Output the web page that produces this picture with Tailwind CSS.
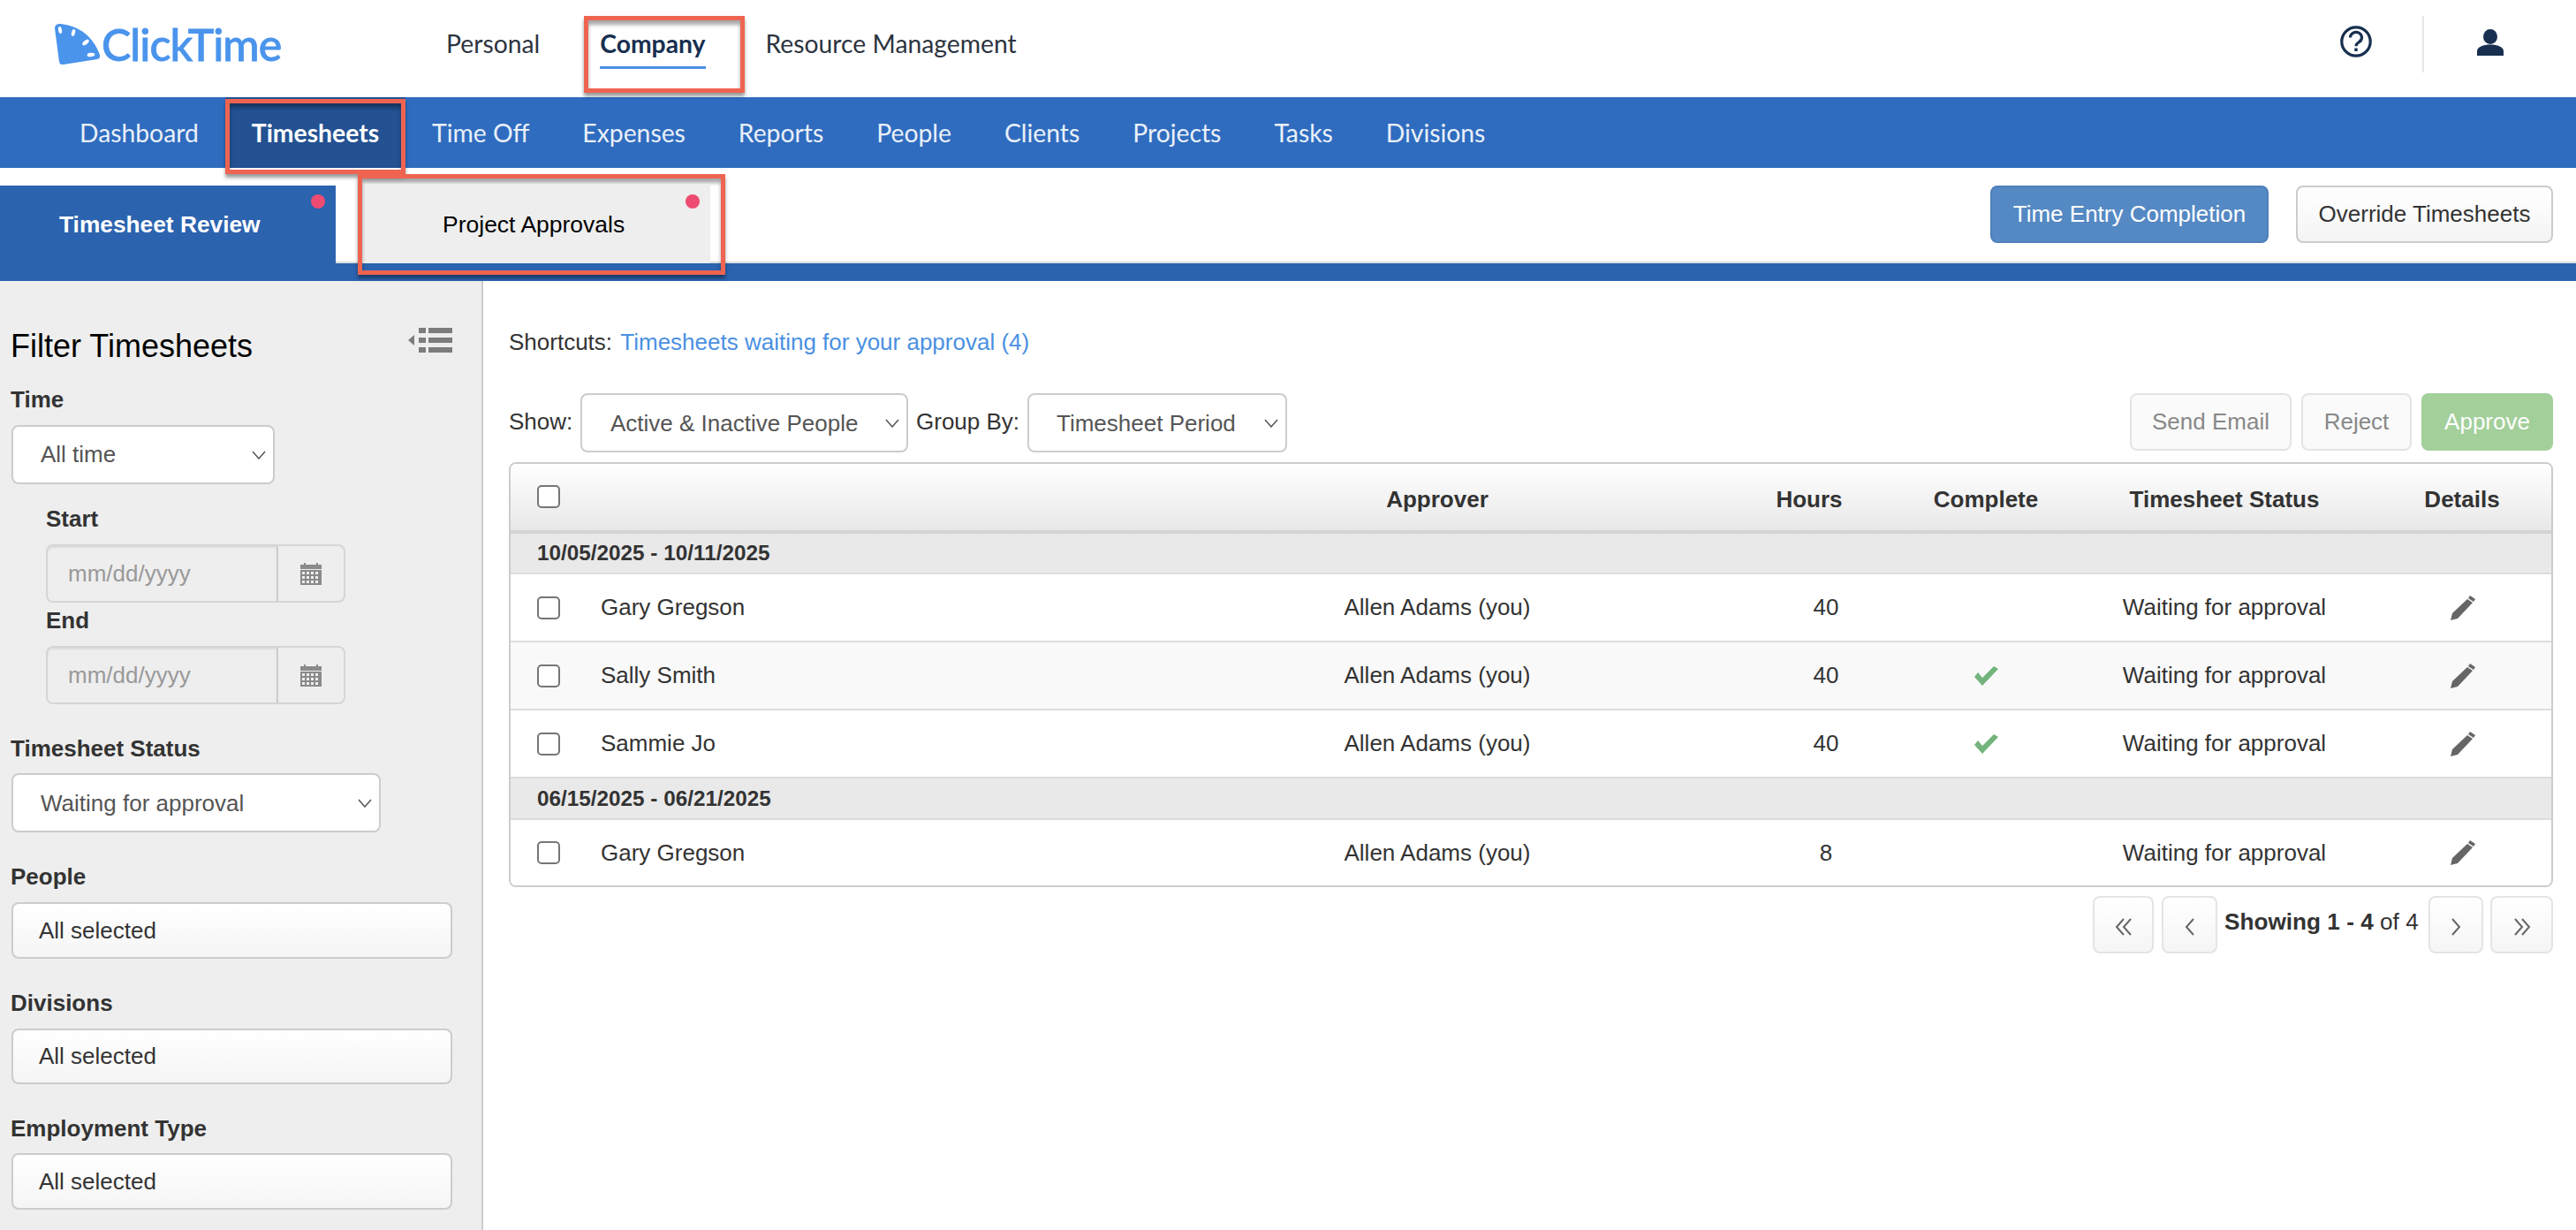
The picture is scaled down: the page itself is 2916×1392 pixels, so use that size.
<!DOCTYPE html>
<html lang="en">

<head>
    <meta charset="UTF-8">
    <title>ClickTime - Timesheet Review</title>
    <script src="https://cdn.jsdelivr.net/npm/@tailwindcss/browser@4"></script>
</head>

<body class="relative w-[2916px] h-[1392px] overflow-hidden bg-white font-['Liberation_Sans',sans-serif] text-[26px] text-[#333]">
    <!--Top bar-->
    <header class="flex h-[110px] font-['Lato',sans-serif] text-[28.3px] text-[#2c3440]">
        <div class="flex w-[505px] pl-[60px] pt-[27px] items-start gap-[2px] shrink-0">
            <svg class="w-[53px] h-[46px]" viewBox="0 0 53 46">
                <path d="M2 5Q2 0 8 0C30 2 46 15 53 35Q54 39 50 40L12 46Q8 47 7 43Z" fill="#4a94ec"/>
                <ellipse cx="8" cy="7" rx="2" ry="4" fill="#fff" transform="rotate(-10 8 7)"/>
                <ellipse cx="23" cy="10" rx="2" ry="4" fill="#fff" transform="rotate(15 23 10)"/>
                <ellipse cx="37" cy="21" rx="2.200" ry="4.400" fill="#fff" transform="rotate(50 37 21)"/>
                <ellipse cx="43" cy="35" rx="2.200" ry="4.400" fill="#fff" transform="rotate(85 43 35)"/>
            </svg>
            <span class="text-[50px] leading-[46px] font-medium text-[#4a94ec] tracking-[-1px] [-webkit-text-stroke:0.8px_#4a94ec]">ClickTime</span>
        </div>
        <nav class="flex gap-[68px] pt-[32px] leading-[34px]">
            <a class="h-[46px]">Personal</a>
            <a class="h-[46px] font-bold text-[#182f50] border-b-[3px] border-[#4a90e2]">Company</a>
            <a class="h-[46px]">Resource Management</a>
        </nav>
        <div class="ml-auto flex items-start h-[64px] mt-[18px] pr-[82px]">
            <svg class="w-[36px] h-[36px] mt-[11px]" viewBox="0 0 36 36" fill="none" stroke="#182f50">
                <circle cx="18" cy="18" r="16.200" stroke-width="3.200"/>
                <path d="M11.500 13.500a6.500 6 0 1 1 10 5c-2.500 1.600-3.500 2.500-3.500 4.700" stroke-width="3.200"/>
                <path d="M18 25.500v3.500" stroke-width="3.400"/>
            </svg>
            <div class="ml-[57px] w-[2px] h-[64px] bg-[#e6e6e6]"></div>
            <svg class="ml-[60px] w-[30px] h-[30px] mt-[15px]" viewBox="0 0 30 30" fill="#182f50">
                <ellipse cx="15" cy="8.500" rx="8" ry="8.500"/>
                <path d="M0 30v-5c0-5 7-7.500 15-7.500S30 20 30 25v5Z"/>
            </svg>
        </div>
    </header>

    <!--Blue nav-->
    <nav class="flex h-[80px] pl-[60px] bg-[#2f6cbf] font-['Lato',sans-serif] text-[28.3px] text-white/90 leading-[80px]">
        <a class="px-[30px]">Dashboard</a>
        <a class="px-[30px] bg-[#235192] font-bold text-white">Timesheets</a>
        <a class="px-[30px]">Time Off</a>
        <a class="px-[30px]">Expenses</a>
        <a class="px-[30px]">Reports</a>
        <a class="px-[30px]">People</a>
        <a class="px-[30px]">Clients</a>
        <a class="px-[30px]">Projects</a>
        <a class="px-[30px]">Tasks</a>
        <a class="px-[30px]">Divisions</a>
    </nav>

    <!--Tabs-->
    <div class="flex items-end h-[108px] border-b-2 border-[#ddd]">
        <div class="relative w-[380px] h-[88px] -mb-[2px] pl-[67px] bg-[#2b63af] font-bold text-white text-[26.3px] leading-[88px]">
            Timesheet Review
            <span class="absolute left-[352px] top-[10px] w-[16px] h-[16px] rounded-full bg-[#ee4b72]"></span>
        </div>
        <div class="relative ml-[30px] w-[394px] h-[88px] -mb-[2px] pl-[91px] bg-[#eee] text-black text-[26.5px] leading-[88px]">
            Project Approvals
            <span class="absolute left-[366px] top-[10px] w-[16px] h-[16px] rounded-full bg-[#ee4b72]"></span>
        </div>
        <div class="ml-auto self-start flex gap-[31px] mt-[20px] pr-[26px]">
            <button class="w-[315px] h-[65px] rounded-[8px] bg-[#5589c4] border-2 border-[#4f80bb] text-white">Time Entry Completion</button>
            <button class="w-[291px] h-[65px] rounded-[8px] bg-gradient-to-b from-white to-[#f4f4f4] border-2 border-[#ccc]">Override Timesheets</button>
        </div>
    </div>
    <div class="h-[20px] bg-[#2b63af]"></div>

    <div class="flex h-[1074px]">
        <!--Filters-->
        <aside class="w-[547px] shrink-0 pl-[13px] pr-[33px] bg-[#eee] border-r-2 border-[#ccc]">
            <div class="flex justify-between mt-[50px] h-[44px]">
                <h2 class="text-[36px] leading-[48px] text-black -ml-px">Filter Timesheets</h2>
                <svg class="w-[50px] h-[28px] mt-[3px]" viewBox="0 0 50 28" fill="#7c7c7d">
                    <path d="M0 14L7 8V20Z"/>
                    <rect x="12" y="0" width="8" height="6"/><rect x="12" y="11" width="8" height="6"/><rect x="12" y="22" width="8" height="6"/>
                    <rect x="23" y="0" width="27" height="6"/><rect x="23" y="11" width="27" height="6"/><rect x="23" y="22" width="27" height="6"/>
                </svg>
            </div>

            <label class="block -ml-px mt-[25px] h-[30px] leading-[30px] font-bold">Time</label>
            <div class="flex items-center justify-between mt-[14px] w-[298px] h-[67px] pl-[31px] pr-[8px] bg-white border-2 border-[#ccc] rounded-[8px] text-[#555]">
                <span>All time</span>
                <svg class="w-[16px] h-[10px]" viewBox="0 0 16 10" fill="none" stroke="#555" stroke-width="1.500"><path d="M1 1l7 8 7-8"/></svg>
            </div>

            <div class="ml-[39px]">
                <label class="block mt-[24px] h-[30px] leading-[30px] font-bold">Start</label>
                <div class="flex mt-[14px] w-[339px] h-[66px] border-2 border-[#d5d5d5] rounded-[8px]">
                    <div class="w-[261px] pl-[23px] leading-[62px] text-[#999] bg-[#eee] border-r-2 border-[#ccc] rounded-l-[6px] shadow-[inset_0_2px_2px_rgba(0,0,0,0.08)]">mm/dd/yyyy</div>
                    <div class="flex-1 flex items-center justify-center">
                        <svg class="w-[24px] h-[26px]" viewBox="0 0 24 26" fill="#8a8a8a">
                            <path d="M0 3h4V1h2v2h12V1h2v2h4v5H0Z"/>
                            <path fill-rule="evenodd" d="M0 9h24v17H0ZM2 11v3h3v-3Zm5 0v3h3v-3Zm5 0v3h3v-3Zm5 0v3h3v-3ZM2 16v3h3v-3Zm5 0v3h3v-3Zm5 0v3h3v-3Zm5 0v3h3v-3ZM2 21v3h3v-3Zm5 0v3h3v-3Zm5 0v3h3v-3Zm5 0v3h3v-3Z"/>
                        </svg>
                    </div>
                </div>
                <label class="block mt-[5px] h-[30px] leading-[30px] font-bold">End</label>
                <div class="flex mt-[14px] w-[339px] h-[66px] border-2 border-[#d5d5d5] rounded-[8px]">
                    <div class="w-[261px] pl-[23px] leading-[62px] text-[#999] bg-[#eee] border-r-2 border-[#ccc] rounded-l-[6px] shadow-[inset_0_2px_2px_rgba(0,0,0,0.08)]">mm/dd/yyyy</div>
                    <div class="flex-1 flex items-center justify-center">
                        <svg class="w-[24px] h-[26px]" viewBox="0 0 24 26" fill="#8a8a8a">
                            <path d="M0 3h4V1h2v2h12V1h2v2h4v5H0Z"/>
                            <path fill-rule="evenodd" d="M0 9h24v17H0ZM2 11v3h3v-3Zm5 0v3h3v-3Zm5 0v3h3v-3Zm5 0v3h3v-3ZM2 16v3h3v-3Zm5 0v3h3v-3Zm5 0v3h3v-3Zm5 0v3h3v-3ZM2 21v3h3v-3Zm5 0v3h3v-3Zm5 0v3h3v-3Zm5 0v3h3v-3Z"/>
                        </svg>
                    </div>
                </div>
            </div>

            <label class="block -ml-px mt-[35px] h-[30px] leading-[30px] font-bold">Timesheet Status</label>
            <div class="flex items-center justify-between mt-[13px] w-[418px] h-[67px] pl-[31px] pr-[8px] bg-white border-2 border-[#ccc] rounded-[8px] text-[#555]">
                <span class="pt-[2px]">Waiting for approval</span>
                <svg class="w-[16px] h-[10px]" viewBox="0 0 16 10" fill="none" stroke="#555" stroke-width="1.500"><path d="M1 1l7 8 7-8"/></svg>
            </div>

            <label class="block -ml-px mt-[35px] h-[30px] leading-[30px] font-bold">People</label>
            <button class="block mt-[14px] w-[499px] h-[64px] pl-[29px] text-left bg-gradient-to-b from-white to-[#f5f5f5] border-2 border-[#ccc] rounded-[8px]">All selected</button>

            <label class="block -ml-px mt-[35px] h-[30px] leading-[30px] font-bold">Divisions</label>
            <button class="block mt-[14px] w-[499px] h-[63px] pl-[29px] text-left bg-gradient-to-b from-white to-[#f5f5f5] border-2 border-[#ccc] rounded-[8px]">All selected</button>

            <label class="block -ml-px mt-[35px] h-[30px] leading-[30px] font-bold">Employment Type</label>
            <button class="block mt-[13px] w-[499px] h-[64px] pl-[29px] text-left bg-gradient-to-b from-white to-[#f5f5f5] border-2 border-[#ccc] rounded-[8px]">All selected</button>
        </aside>

        <!--Table area-->
        <main class="flex-1 pl-[29px] pr-[26px]">
            <p class="mt-[53px] h-[32px] leading-[32px]">Shortcuts: <a class="ml-[2px] text-[#4a90e2]">Timesheets waiting for your approval (4)</a></p>

            <div class="flex mt-[42px] h-[67px]">
                <span class="w-[81px] leading-[64px]">Show:</span>
                <div class="flex items-center justify-between w-[371px] h-[67px] pl-[32px] pr-[8px] border-2 border-[#ccc] rounded-[8px] text-[#555]">
                    <span class="pt-[2px]">Active &amp; Inactive People</span>
                    <svg class="w-[16px] h-[10px]" viewBox="0 0 16 10" fill="none" stroke="#555" stroke-width="1.500"><path d="M1 1l7 8 7-8"/></svg>
                </div>
                <span class="ml-[9px] w-[126px] leading-[64px]">Group By:</span>
                <div class="flex items-center justify-between w-[294px] h-[67px] pl-[31px] pr-[8px] border-2 border-[#ccc] rounded-[8px] text-[#555]">
                    <span class="pt-[2px]">Timesheet Period</span>
                    <svg class="w-[16px] h-[10px]" viewBox="0 0 16 10" fill="none" stroke="#555" stroke-width="1.500"><path d="M1 1l7 8 7-8"/></svg>
                </div>
                <div class="ml-auto flex gap-[11px] h-[65px]">
                    <button class="w-[183px] rounded-[8px] border-2 border-[#e4e4e4] bg-[#fafafa] text-[#888]">Send Email</button>
                    <button class="w-[125px] rounded-[8px] border-2 border-[#e4e4e4] bg-[#fafafa] text-[#888]">Reject</button>
                    <button class="w-[149px] rounded-[8px] bg-[#a3cf9b] text-white">Approve</button>
                </div>
            </div>

            <div class="mt-[11px] border-2 border-[#ccc] rounded-[8px] overflow-hidden">
                <div class="grid grid-cols-[888px_322px_200px_158px_204px_336px_202px] items-center h-[79px] border-b-4 border-[#d4d4d4] bg-gradient-to-b from-white to-[#e8e8e8] font-bold">
                    <div class="pl-[30px] flex -mt-[2px]"><input type="checkbox" class="appearance-none w-[26px] h-[26px] bg-white border-2 border-[#767676] rounded-[5px]"></div>
                    <div class="text-center pt-[6px]">Approver</div>
                    <div></div>
                    <div class="text-center pr-[38px] pt-[6px]">Hours</div>
                    <div class="text-center pt-[6px]">Complete</div>
                    <div class="text-center pt-[6px]">Timesheet Status</div>
                    <div class="text-center pt-[6px]">Details</div>
                </div>

                <div class="h-[46px] pl-[30px] leading-[44px] text-[24.3px] font-bold bg-[#e9e9e9] border-b-2 border-[#ddd]">10/05/2025 - 10/11/2025</div>

                <div class="grid grid-cols-[888px_322px_200px_158px_204px_336px_202px] items-center h-[77px] border-b-2 border-[#ddd] bg-white">
                    <div class="pl-[30px] flex items-center"><input type="checkbox" class="appearance-none w-[26px] h-[26px] bg-white border-2 border-[#767676] rounded-[5px]"><span class="ml-[46px]">Gary Gregson</span></div>
                    <div class="text-center">Allen Adams (you)</div>
                    <div></div>
                    <div class="text-center">40</div>
                    <div></div>
                    <div class="text-center">Waiting for approval</div>
                    <div class="flex justify-center">
                        <svg class="w-[29px] h-[28px]" viewBox="0 0 29 28" fill="#666"><path d="M20 4l6 4L9 26l-8 2 2-8Z"/><path d="M23 0l6 4-2 3-6-4Z"/></svg>
                    </div>
                </div>

                <div class="grid grid-cols-[888px_322px_200px_158px_204px_336px_202px] items-center h-[77px] border-b-2 border-[#ddd] bg-[#f9f9f9]">
                    <div class="pl-[30px] flex items-center"><input type="checkbox" class="appearance-none w-[26px] h-[26px] bg-white border-2 border-[#767676] rounded-[5px]"><span class="ml-[46px]">Sally Smith</span></div>
                    <div class="text-center">Allen Adams (you)</div>
                    <div></div>
                    <div class="text-center">40</div>
                    <div class="flex justify-center">
                        <svg class="w-[27px] h-[22px]" viewBox="0 0 27 22" fill="#73b47c"><path d="M0 12l4-5 5 6L22 0l5 3L9 22Z"/></svg>
                    </div>
                    <div class="text-center">Waiting for approval</div>
                    <div class="flex justify-center">
                        <svg class="w-[29px] h-[28px]" viewBox="0 0 29 28" fill="#666"><path d="M20 4l6 4L9 26l-8 2 2-8Z"/><path d="M23 0l6 4-2 3-6-4Z"/></svg>
                    </div>
                </div>

                <div class="grid grid-cols-[888px_322px_200px_158px_204px_336px_202px] items-center h-[77px] border-b-2 border-[#ddd] bg-white">
                    <div class="pl-[30px] flex items-center"><input type="checkbox" class="appearance-none w-[26px] h-[26px] bg-white border-2 border-[#767676] rounded-[5px]"><span class="ml-[46px]">Sammie Jo</span></div>
                    <div class="text-center">Allen Adams (you)</div>
                    <div></div>
                    <div class="text-center">40</div>
                    <div class="flex justify-center">
                        <svg class="w-[27px] h-[22px]" viewBox="0 0 27 22" fill="#73b47c"><path d="M0 12l4-5 5 6L22 0l5 3L9 22Z"/></svg>
                    </div>
                    <div class="text-center">Waiting for approval</div>
                    <div class="flex justify-center">
                        <svg class="w-[29px] h-[28px]" viewBox="0 0 29 28" fill="#666"><path d="M20 4l6 4L9 26l-8 2 2-8Z"/><path d="M23 0l6 4-2 3-6-4Z"/></svg>
                    </div>
                </div>

                <div class="h-[47px] pl-[30px] leading-[45px] text-[24.3px] font-bold bg-[#e9e9e9] border-b-2 border-[#ddd]">06/15/2025 - 06/21/2025</div>

                <div class="grid grid-cols-[888px_322px_200px_158px_204px_336px_202px] items-center h-[74px] bg-white">
                    <div class="pl-[30px] flex items-center"><input type="checkbox" class="appearance-none w-[26px] h-[26px] bg-white border-2 border-[#767676] rounded-[5px]"><span class="ml-[46px]">Gary Gregson</span></div>
                    <div class="text-center">Allen Adams (you)</div>
                    <div></div>
                    <div class="text-center">8</div>
                    <div></div>
                    <div class="text-center">Waiting for approval</div>
                    <div class="flex justify-center">
                        <svg class="w-[29px] h-[28px]" viewBox="0 0 29 28" fill="#666"><path d="M20 4l6 4L9 26l-8 2 2-8Z"/><path d="M23 0l6 4-2 3-6-4Z"/></svg>
                    </div>
                </div>
            </div>

            <!--Pagination-->
            <div class="flex justify-end mt-[10px] h-[65px]">
                <button class="flex items-center justify-center pt-[4px] w-[69px] rounded-[8px] border-2 border-[#e4e4e4] bg-gradient-to-b from-white to-[#f5f5f5]">
                    <svg class="w-[20px] h-[20px]" viewBox="0 0 20 20" fill="none" stroke="#666" stroke-width="2"><path d="M10 1L2 10l8 9M18 1l-8 9 8 9"/></svg>
                </button>
                <button class="ml-[9px] flex items-center justify-center pt-[4px] w-[63px] rounded-[8px] border-2 border-[#e4e4e4] bg-gradient-to-b from-white to-[#f5f5f5]">
                    <svg class="w-[12px] h-[20px]" viewBox="0 0 12 20" fill="none" stroke="#666" stroke-width="2"><path d="M10 1L2 10l8 9"/></svg>
                </button>
                <span class="ml-[8px] w-[221px] whitespace-nowrap leading-[58px] text-[26.2px]"><b>Showing 1 - 4</b> of 4</span>
                <button class="ml-[10px] flex items-center justify-center pt-[4px] w-[62px] rounded-[8px] border-2 border-[#e4e4e4] bg-gradient-to-b from-white to-[#f5f5f5]">
                    <svg class="w-[12px] h-[20px]" viewBox="0 0 12 20" fill="none" stroke="#666" stroke-width="2"><path d="M2 1l8 9-8 9"/></svg>
                </button>
                <button class="ml-[8px] flex items-center justify-center pt-[4px] w-[71px] rounded-[8px] border-2 border-[#e4e4e4] bg-gradient-to-b from-white to-[#f5f5f5]">
                    <svg class="w-[20px] h-[20px]" viewBox="0 0 20 20" fill="none" stroke="#666" stroke-width="2"><path d="M2 1l8 9-8 9M10 1l8 9-8 9"/></svg>
                </button>
            </div>
        </main>
    </div>

    <!--Red annotation boxes drawn over the screenshot-->
    <div class="absolute left-[661px] top-[18px] w-[182px] h-[87px] border-[5px] border-[#ee6451] shadow-[inset_0_5px_4px_rgba(0,0,0,0.35),0_4px_4px_rgba(0,0,0,0.4)]"></div>
    <div class="absolute left-[255px] top-[112px] w-[204px] h-[85px] border-[5px] border-[#ee6451] shadow-[inset_0_5px_4px_rgba(0,0,0,0.35),0_4px_4px_rgba(0,0,0,0.4)]"></div>
    <div class="absolute left-[405px] top-[197px] w-[416px] h-[114px] border-[5px] border-[#ee6451] shadow-[inset_0_5px_4px_rgba(0,0,0,0.35),0_4px_4px_rgba(0,0,0,0.4)]"></div>
</body>

</html>
